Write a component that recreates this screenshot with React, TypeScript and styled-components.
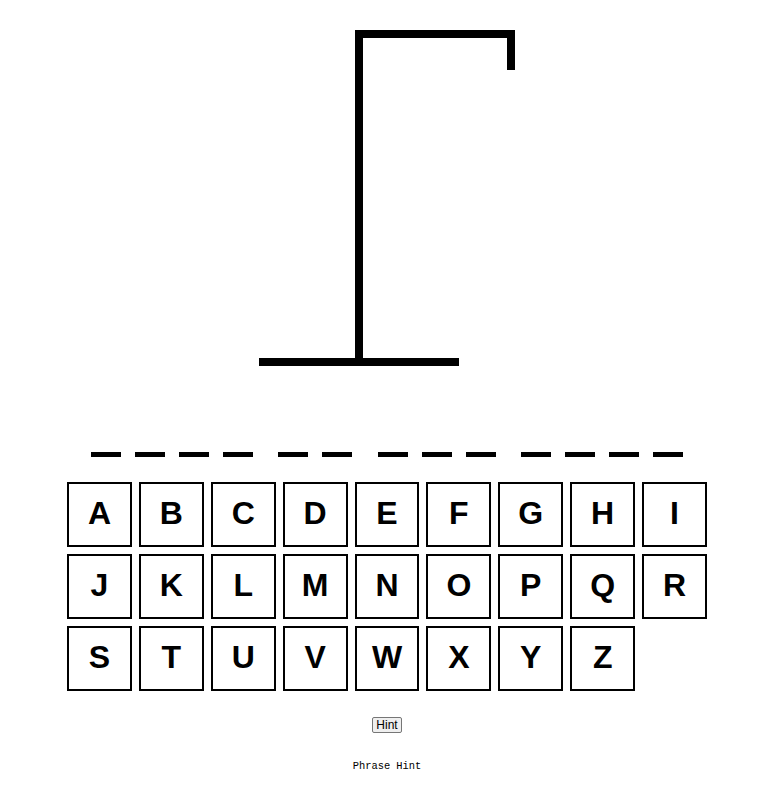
import React, { FC } from "react";
import styled, { createGlobalStyle } from "styled-components";

const GlobalStyle = createGlobalStyle`
  body {
    margin: 8px;
    background: #ffffff;
    font-family: "Liberation Sans", Arial, sans-serif;
  }
`;

const phrase = ["____", "__", "___", "____"];
const letters = "ABCDEFGHIJKLMNOPQRSTUVWXYZ".split("");

const Gallows: FC = () => (
  <GallowsSvg width={260} height={350} viewBox="0 0 260 350">
    <rect x={97} y={10} width={160} height={8} fill="#000" />
    <rect x={249} y={10} width={8} height={40} fill="#000" />
    <rect x={97} y={10} width={8} height={330} fill="#000" />
    <rect x={1} y={338} width={200} height={8} fill="#000" />
  </GallowsSvg>
);

const App: FC = () => {
  return (
    <Page>
      <GlobalStyle />
      <Gallows />
      <Blanks>
        {phrase.map((word, i) => (
          <Word key={i}>
            {word.split("").map((_, j) => (
              <Blank key={j} />
            ))}
          </Word>
        ))}
      </Blanks>
      <Keyboard>
        {letters.map((l) => (
          <Key key={l}>{l}</Key>
        ))}
      </Keyboard>
      <HintButton>Hint</HintButton>
      <HintText>Phrase Hint</HintText>
    </Page>
  );
};

const Page = styled.div`
  display: flex;
  flex-direction: column;
  align-items: center;
`;

const GallowsSvg = styled.svg`
  display: block;
  margin-top: 12px;
`;

const Blanks = styled.div`
  display: flex;
  gap: 25.5px;
  margin-top: 82px;
  margin-left: -2px;
`;

const Word = styled.div`
  display: flex;
  gap: 14px;
`;

const Blank = styled.span`
  display: block;
  width: 30px;
  height: 5px;
  background: #000;
`;

const Keyboard = styled.div`
  display: grid;
  grid-template-columns: repeat(9, 1fr);
  grid-auto-rows: 65px;
  gap: 7px;
  width: 640px;
  margin-top: 25px;
  margin-left: -2px;
`;

const Key = styled.button`
  box-sizing: border-box;
  display: flex;
  align-items: center;
  justify-content: center;
  padding: 0 0 3px;
  background: #ffffff;
  border: 2px solid #000;
  color: #000;
  font-family: "Liberation Sans", Arial, sans-serif;
  font-weight: bold;
  font-size: 32px;
  cursor: pointer;
`;

const HintButton = styled.button`
  box-sizing: border-box;
  height: 16px;
  margin-top: 26px;
  margin-left: -2px;
  padding: 0 3px;
  background: #efefef;
  border: 1px solid #767676;
  border-radius: 2px;
  color: #000;
  font-family: "Liberation Sans", Arial, sans-serif;
  font-size: 12px;
  line-height: 14px;
`;

const HintText = styled.div`
  margin-top: 27px;
  margin-left: -2px;
  font-family: "Liberation Mono", "Courier New", monospace;
  font-size: 10.4px;
  line-height: 12px;
  color: #000;
`;

export default App;
